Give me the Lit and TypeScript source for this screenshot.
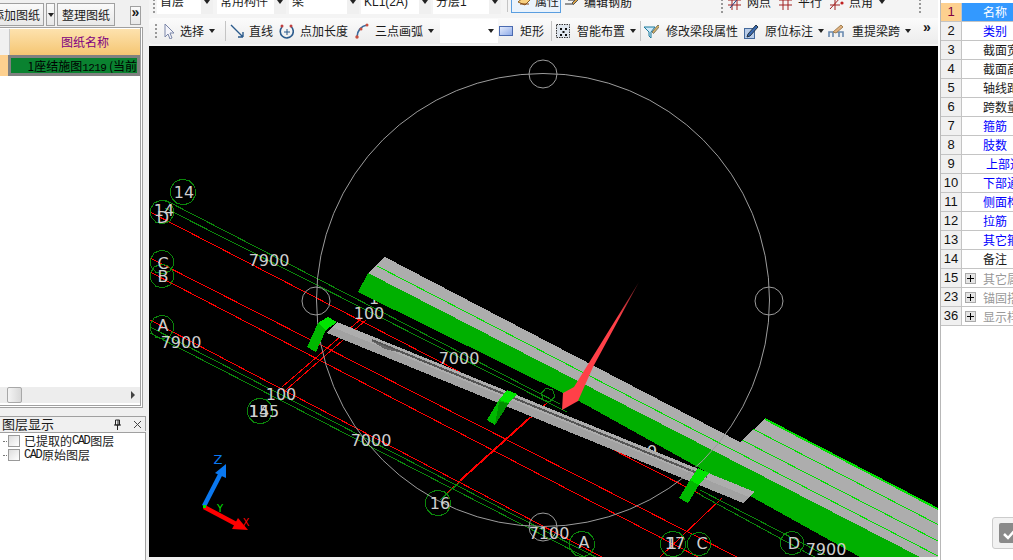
import { LitElement, html, css, svg } from "lit";
import { customElement } from "lit/decorators.js";

const poly = (cx: number, cy: number, r: number, n = 10) =>
  Array.from({ length: n }, (_, i) => {
    const a = (i * 2 * Math.PI) / n + 0.2;
    return `${(cx + r * Math.cos(a)).toFixed(1)},${(cy + r * Math.sin(a)).toFixed(1)}`;
  }).join(" ");

const RED: number[][] = [
  [150, 212, 460, 372], [600, 443, 700, 494],
  [150, 258, 900, 640], [150, 272, 800, 610], [150, 320, 640, 577],
  [362, 318, 282, 387], [366, 320, 286, 390], [548, 402, 447, 493], [530, 417, 460, 480], [722, 498, 660, 557],
];
const GREEN: number[][] = [
  [165, 200, 560, 404], [165, 208, 567, 412], [700, 490, 825, 555], [697, 493, 820, 560],
  [150, 327, 640, 580], [150, 333, 620, 575], [440, 500, 460, 482],
];
const BUBBLES: number[][] = [
  [183, 192, 13], [162, 212, 12], [162, 262, 12], [162, 276, 12], [162, 327, 12], [260, 411, 13],
  [438, 503, 13], [582, 544, 13], [673, 544, 13], [699, 544, 12], [792, 543, 12],
];
const LABELS: [string, number, number][] = [
  ["14", 184, 192], ["14", 164, 210], ["D", 163, 217], ["C", 163, 263], ["B", 163, 276], ["A", 163, 325],
  ["7900", 269, 260], ["7900", 181, 342], ["100", 369, 313], ["7000", 459, 358], ["100", 281, 394],
  ["155", 264, 411], ["14", 259, 411], ["7000", 371, 440], ["16", 440, 503], ["7100", 549, 533],
  ["A", 584, 542], ["17", 675, 543], ["1", 672, 543], ["C", 702, 543], ["D", 794, 543], ["7900", 826, 549],
];

const canvasArt = svg`
  <defs>
    <linearGradient id="arr" gradientUnits="userSpaceOnUse" x1="639" y1="282" x2="620" y2="318">
      <stop offset="0" stop-color="#5a181c"/>
      <stop offset="1" stop-color="#ff4048"/>
    </linearGradient>
  </defs>
  <rect x="149" y="46" width="789" height="511" fill="#000"/>
  <g shape-rendering="crispEdges">
    ${RED.map((l) => svg`<line x1=${l[0]} y1=${l[1]} x2=${l[2]} y2=${l[3]} stroke="#f00" stroke-width="1"/>`)}
    ${GREEN.map((l) => svg`<line x1=${l[0]} y1=${l[1]} x2=${l[2]} y2=${l[3]} stroke="#0b860b" stroke-width="1"/>`)}
    ${BUBBLES.map((b) => svg`<polygon points=${poly(b[0], b[1], b[2])} fill="none" stroke="#0b860b"/>`)}
    <polygon points=${poly(548, 395, 7, 6)} fill="none" stroke="#0b860b"/>
  </g>
  <text x="652" y="457" class="lbl">9</text>
  <text x="374" y="304" class="lbl">1</text>

  <g shape-rendering="crispEdges">
    <polygon points="358,292 368,273 730,455 925,557 860,557 577,400" fill="#00b000"/>
    <polygon points="368,273 385,257 740,442 765,419 938,509 938,557 920,557" fill="#adadad"/>
    <line x1="377" y1="266" x2="938" y2="556" stroke="#00e000"/>
    <line x1="753" y1="429" x2="938" y2="524.5" stroke="#00e000"/>
    <line x1="742" y1="440" x2="938" y2="541" stroke="#00e000"/>
    <line x1="765" y1="419" x2="938" y2="509" stroke="#00e000" stroke-width="2"/>

    <polygon points="337,322 755,492 743,503 327,333" fill="#adadad"/>
    <polygon points="332,327 749,497 743,503 327,333" fill="#a2a2a2"/>
    <line x1="372" y1="340" x2="707" y2="477" stroke="#555" stroke-width="2"/>
    <polygon points="370,340 402,353 385,349" fill="#666"/>
  </g>

  <circle cx="543" cy="300" r="226.5" fill="none" stroke="#9c9c9c"/>
  <circle cx="543" cy="74" r="14" fill="none" stroke="#9c9c9c"/>
  <circle cx="316" cy="301" r="14" fill="none" stroke="#9c9c9c"/>
  <circle cx="769" cy="301" r="14" fill="none" stroke="#9c9c9c"/>
  <circle cx="543" cy="527" r="14" fill="none" stroke="#9c9c9c"/>

  <g shape-rendering="crispEdges">
    <polygon points="318,323 328,317 337,322 326,330 316,352 307,347" fill="#00b800"/>
    <polygon points="318,323 328,317 337,322 326,330" fill="#00e400"/>
    <polygon points="499,400 507,390 517,394 509,403 495,425 487,420" fill="#00b800"/>
    <polygon points="499,400 507,390 517,394 509,403" fill="#00e400"/>
    <polygon points="509,403 495,425 499,402" fill="#009000"/>
    <polygon points="690,480 698,468 709,473 699,485 688,503 679,498" fill="#00b800"/>
    <polygon points="690,480 698,468 709,473 699,485" fill="#00e400"/>
  </g>

  <polygon points="639,282 593,367 578,401 562,410 563,393 574,387" fill="url(#arr)"/>

  ${LABELS.map((t) => svg`<text x=${t[1]} y=${t[2] + 6} class="lbl">${t[0]}</text>`)}

  <line x1="204" y1="506" x2="221" y2="473" stroke="#0a78f0" stroke-width="4.5"/>
  <polygon points="226,464 226,478 215,473" fill="#0a78f0"/>
  <text x="218" y="464" class="axis" fill="#0a78f0">Z</text>
  <line x1="204" y1="507" x2="238" y2="525" stroke="#f00" stroke-width="4.5"/>
  <polygon points="248,530 232,529 238,518" fill="#f00"/>
  <text x="246" y="526" class="axis small" fill="#f00">X</text>
  <text x="220" y="512" class="axis small" fill="#00e000">Y</text>
  <rect x="203" y="505" width="3" height="3" fill="#00e000"/>
`;

const arrow = html`<i class="arrow"></i>`;

const ic = {
  cursor: svg`<path d="M3 1v13l3-3 2 5 2-1-2-5h4z" fill="#f4f4fa" stroke="#7a86a8"/>`,
  line: svg`<path d="M2 2 14 14M14 14V9M14 14H9" fill="none" stroke="#2a5a8c" stroke-width="1.4"/>`,
  len: svg`<path d="M4 4a6.5 6.5 0 1 0 9-.5" fill="none" stroke="#2a5a8c" stroke-width="1.6"/><path d="M9 6v6M6 9h6" stroke="#2a5a8c"/><circle cx="4" cy="3" r="1.5" fill="#c04040"/><circle cx="13" cy="3" r="1.5" fill="#c04040"/>`,
  arc: svg`<path d="M3 14C3 8 7 3 13 2" fill="none" stroke="#3a6a9c" stroke-width="1.6"/><circle cx="3" cy="14" r="1.7" fill="#c85040"/><circle cx="7" cy="6" r="1.5" fill="#c85040"/><circle cx="13" cy="2" r="1.5" fill="#c85040"/>`,
  rect: svg`<defs><linearGradient id="rg" x1="0" y1="0" x2="1" y2="1"><stop offset="0" stop-color="#e8eefc"/><stop offset="1" stop-color="#8aa8e8"/></linearGradient></defs><rect x="1.5" y="3.5" width="13" height="9" fill="url(#rg)" stroke="#4a6ab0"/>`,
  smart: svg`<rect x="1.5" y="1.5" width="13" height="13" fill="#dfe6ee" stroke="#333" stroke-dasharray="1.5 1"/><path d="M5 5h2v2H5zM10 5h2v2H10zM7.5 8h2v2h-2zM5 11h2v2H5zM10 11h2v2H10z" fill="#111"/>`,
  edit: svg`<path d="M1 4h11L8 9v6l-2-2V9z" fill="#cfe8f8" stroke="#1a7a9c"/><path d="M9 9l6-7 1.5 1.5-6 7z" fill="#d8b060" stroke="#776"/>`,
  mark: svg`<rect x="1.5" y="5.5" width="10" height="10" fill="#b8cce8" stroke="#456a9c"/><path d="M5 11l8-9 2 2-8 9-3 1z" fill="#3a6ab0" stroke="#234"/>`,
  span: svg`<path d="M1 14v-5h14v5M5 14v-5M11 14v-5" fill="none" stroke="#6a8ab0" stroke-width="1.6"/><path d="M5 9l8-7 2 2-7 6z" fill="#e0b080" stroke="#a08050"/>`,
  prop: svg`<path d="M1 9l6-5 6 3-5 5z" fill="#f8d080" stroke="#906020"/><path d="M3 11h9" stroke="#804010"/>`,
  rebar: svg`<path d="M1 10h9M4 6h10" stroke="#333"/><path d="M8 9l6-6 1.5 1.5-6 6z" fill="#d8a040" stroke="#555"/>`,
  node: svg`<path d="M5 1v15M10 1v15M1 6h13M1 11h13" stroke="#a02020"/><path d="M3 14 13 2" stroke="#204080"/>`,
  para: svg`<path d="M5 1v15M10 1v15M1 6h13M1 11h13" stroke="#a02020"/>`,
  ang: svg`<path d="M1 15 12 3M6 1v15M1 11h10" stroke="#a02020"/><circle cx="13" cy="9" r="1.6" fill="#c02020"/>`,
};
const icon = (p: unknown) => html`<svg class="ic" viewBox="0 0 16 16" width="16" height="16">${p}</svg>`;

type Item = { w: number; iw?: number; i?: unknown; t?: string; a?: boolean; sep?: boolean; grip?: boolean };
const TB2: Item[] = [
  { w: 12, grip: true },
  { w: 60, iw: 18, i: ic.cursor, t: "选择", a: true },
  { w: 7, sep: true },
  { w: 49, iw: 20, i: ic.line, t: "直线" },
  { w: 76, iw: 22, i: ic.len, t: "点加长度" },
  { w: 86, iw: 21, i: ic.arc, t: "三点画弧", a: true },
];
const TB2B: Item[] = [
  { w: 50, iw: 22, i: ic.rect, t: "矩形" },
  { w: 7, sep: true },
  { w: 82, iw: 22, i: ic.smart, t: "智能布置", a: true },
  { w: 6, sep: true },
  { w: 100, iw: 23, i: ic.edit, t: "修改梁段属性" },
  { w: 85, iw: 22, i: ic.mark, t: "原位标注", a: true },
  { w: 88, iw: 24, i: ic.span, t: "重提梁跨", a: true },
];
const COMBOS: [string, number, number][] = [
  ["首层", 56, 4], ["常用构件", 69, 3], ["梁", 70, 2], ["KL1(2A)", 70, 2], ["分层1", 68, 0],
];
const ROWS: [string, string, string][] = [
  ["2", "类别", "b"], ["3", "截面宽度(mm)", ""], ["4", "截面高度(mm)", ""], ["5", "轴线距梁左边线距离", ""],
  ["6", "跨数量", ""], ["7", "箍筋", "b"], ["8", "肢数", "b"], ["9", "上部通长筋", "b u"], ["10", "下部通长筋", "b"],
  ["11", "侧面构造或受扭筋", "b"], ["12", "拉筋", "b"], ["13", "其它箍筋", "b"], ["14", "备注", ""],
];
const GROUPS: [string, string][] = [["15", "其它属性"], ["23", "锚固搭接"], ["36", "显示样式"]];

@customElement("app-root")
export class AppRoot extends LitElement {
  static styles = css`
    :host { display: block; width: 1013px; height: 560px; overflow: hidden; position: relative; background: #f0f0f0;
      font: 12px/16px "Noto Sans CJK SC", "Liberation Sans", sans-serif; color: #1a1a1a; }
    .root { display: flex; height: 560px; }
    .left { width: 149px; flex: none; display: flex; flex-direction: column; overflow: hidden; }
    .tabs { height: 27px; flex: none; display: flex; align-items: flex-start; padding-top: 3px; box-sizing: border-box; }
    .btn { height: 23px; box-sizing: border-box; border: 1px solid #a0a0a0; background: linear-gradient(#fafafa, #e8e8e8);
      display: flex; align-items: center; justify-content: center; font-size: 12px; white-space: nowrap; overflow: hidden; }
    .b1 { width: 44px; justify-content: flex-end; margin-right: 2px; border-left: 0; padding-right: 3px; }
    .b2 { width: 9px; margin-right: 2px; }
    .b3 { width: 58px; margin-right: 15px; }
    .b4 { width: 11px; height: 19px; margin-top: 3px; font: bold 14px/10px "Liberation Sans", sans-serif; align-items: flex-start; padding-top: 0; }
    .draw { width: 143px; height: 381px; flex: none; box-sizing: border-box; border: 1px solid #a0a0a0; border-left: 0;
      background: #fff; box-shadow: inset -1px -1px 0 #fff, inset -2px -2px 0 #a0a0a0; padding: 1px 2px 2px 0; display: flex; flex-direction: column; }
    .thead { display: flex; height: 26px; flex: none; }
    .corner { width: 9px; background: #f0f0f0; border-right: 1px solid #c8c8c8; }
    .hcell { flex: 1; background: linear-gradient(#fde2ae, #f5c673); color: #800080; font-size: 12px;
      display: flex; align-items: center; justify-content: center; padding: 0 0 0 20px; box-sizing: border-box; }
    .trow { display: flex; height: 21px; flex: none; }
    .rowhead { width: 8px; background: #fdd08f; }
    .selcell { flex: 1; box-sizing: border-box; border: 3px solid #808080; background: #0a8230; color: #000; white-space: nowrap;
      overflow: hidden; text-align: right; line-height: 15px; font-size: 12px; }
    .dig { font: 11px/15px "Liberation Mono", monospace; letter-spacing: -0.6px; }
    .tbody { flex: 1; }
    .hscroll { height: 16px; flex: none; margin-bottom: 2px; background: #ededed; display: flex; align-items: center; padding: 0 5px 0 7px; justify-content: space-between; }
    .thumb { width: 15px; height: 16px; box-sizing: border-box; border: 1px solid #a8a8a8; border-radius: 2px; background: linear-gradient(90deg, #f4f4f4, #d8d8d8); }
    .rarr { width: 0; height: 0; border-left: 4px solid #444; border-top: 4px solid transparent; border-bottom: 4px solid transparent; }
    .ltitle { margin-top: 8px; width: 146px; height: 15px; flex: none; box-sizing: border-box; border-top: 1px solid #a0a0a0; border-right: 1px solid #a0a0a0; display: flex; align-items: center; font-size: 13px; white-space: nowrap; padding-left: 2px; }
    .ltitle span { flex: 1; }
    .pin { margin-right: 11px; display: block; }
    .close { margin-right: 3px; display: block; }
    .lbody { margin-top: 1px; width: 146px; flex: 1; box-sizing: border-box; border: 1px solid #a0a0a0; border-left: 0; border-bottom: 0; background: #fff; padding-top: 1px; }
    .node { height: 14px; display: flex; align-items: center; font-size: 12px; white-space: nowrap; }
    .dots { width: 4px; margin: 0 1px 0 3px; border-bottom: 1px dotted #777; }
    .chk { width: 12px; height: 12px; box-sizing: border-box; border: 1px solid #999; background: linear-gradient(135deg, #ddd, #fff); margin-right: 4px; flex: none; }
    .mono { font: 12px/14px "Liberation Mono", monospace; letter-spacing: -1.5px; margin-right: 1px; }

    .center { width: 789px; flex: none; display: flex; flex-direction: column; }
    .tb1 { height: 15px; flex: none; overflow: hidden; background: #f4f4f4; }
    .tb1in { height: 25px; margin-top: -11px; display: flex; align-items: stretch; padding-left: 1px; }
    .grip { flex: none; position: relative; display: flex; justify-content: center; align-items: center; }
    .grip::before { content: ""; width: 2px; height: 14px; background: repeating-linear-gradient(#999 0 2px, transparent 2px 4px); }
    .tb1in .grip { align-items: flex-end; padding-bottom: 1px; }
    .combo { flex: none; box-sizing: border-box; background: #fff; display: flex; align-items: center; padding-left: 3px; overflow: hidden; white-space: nowrap; position: relative; }
    .combo .txt { flex: 1; overflow: hidden; }
    .lat { font-family: "Liberation Sans", "Noto Sans CJK SC", sans-serif; }
    .drop { width: 12px; height: 100%; background: #f0f0f0; flex: none; display: flex; align-items: center; justify-content: center; }
    .arrow { display: inline-block; width: 0; height: 0; border-top: 4px solid #222; border-left: 3.5px solid transparent; border-right: 3.5px solid transparent; flex: none; }
    .t1sep { width: 1px; background: #c4c4c4; margin: 11px 3px 2px 6px; flex: none; }
    .active { width: 50px; flex: none; box-sizing: border-box; border: 1px solid #5a9ee0; background: #eaf3fc; display: flex; align-items: center; height: 24px; padding-left: 5px; margin-right: 3px; gap: 2px; }
    .t1it { display: flex; align-items: center; flex: none; white-space: nowrap; }
    .tb2wrap { height: 31px; flex: none; padding-top: 3px; box-sizing: border-box; background: #f4f4f4; }
    .tb2 { height: 26px; display: flex; align-items: center; padding-left: 1px; border-radius: 4px 0 0 4px; background: linear-gradient(#fbfbfb, #ececec); white-space: nowrap; }
    .it { flex: none; display: flex; align-items: center; height: 100%; }
    .iw { display: flex; flex: none; }
    .it .arrow { margin-left: 5px; }
    .sepw { flex: none; height: 100%; display: flex; align-items: center; justify-content: center; }
    .sepw i { display: block; width: 1px; height: 20px; background: #c4c4c4; }
    .combo2 { width: 58px; flex: none; height: 24px; background: #fff; display: flex; justify-content: flex-end; align-items: center; padding-right: 4px; box-sizing: border-box; }
    .more { flex: none; margin-left: 7px; font: bold 14px/10px "Liberation Sans", sans-serif; align-self: flex-start; margin-top: 4px; }
    .cv { display: block; flex: none; }
    .lbl { font: 16px "DejaVu Sans", sans-serif; fill: #cfcfcf; text-anchor: middle; }
    .axis { font: 13px "DejaVu Sans", sans-serif; text-anchor: middle; }
    .small { font-size: 10px; }

    .right { flex: 1; min-width: 0; background: #fff; display: flex; flex-direction: column; padding: 3px 0 0 2px; position: relative; overflow: hidden; }
    .right::before { content: ""; position: absolute; left: 2px; top: 0; bottom: 0; width: 1px; background: #b8b8b8; }
    .gridw { margin-left: 1px; }
    .r { display: flex; height: 19px; box-sizing: border-box; border-bottom: 1px solid #c4c4c4; }
    .num { width: 21px; flex: none; background: #f0f0f0; border-right: 1px solid #c4c4c4; box-sizing: border-box; text-align: center; font: 13px/18px "Liberation Sans", sans-serif; color: #111; }
    .val { width: 300px; flex: none; padding-left: 21px; line-height: 17px; white-space: nowrap; box-sizing: border-box; }
    .b { color: #0000ff; }
    .u { padding-left: 24px; }
    .sel .num { background: #fdd08f; color: #800040; }
    .sel .val { background: #3399ff; color: #fff; }
    .g .val { color: #999; display: flex; align-items: center; padding-left: 3px; }
    .plus { width: 11px; height: 11px; box-sizing: border-box; border: 1px solid #aaa; background: #e4e4e4; margin-right: 7px; flex: none; position: relative; }
    .plus::before { content: ""; position: absolute; left: 1px; right: 1px; top: 4px; height: 1px; background: #000; }
    .plus::after { content: ""; position: absolute; top: 1px; bottom: 1px; left: 4px; width: 1px; background: #000; }
    .float { position: absolute; left: 992px; top: 517px; width: 40px; height: 32px; box-sizing: border-box; border: 1px solid #ccc; border-radius: 3px; background: #f2f2f2; padding: 5px 0 0 6px; }
  `;

  private item(it: Item) {
    if (it.grip) return html`<div class="grip" style="width:${it.w}px"></div>`;
    if (it.sep) return html`<div class="sepw" style="width:${it.w}px"><i></i></div>`;
    return html`<div class="it" style="width:${it.w}px"><span class="iw" style="width:${it.iw}px">${icon(it.i)}</span><span>${it.t}</span>${it.a ? arrow : ""}</div>`;
  }

  render() {
    return html`<div class="root">
      <div class="left">
        <div class="tabs">
          <div class="btn b1">添加图纸</div>
          <div class="btn b2">${arrow}</div>
          <div class="btn b3">整理图纸</div>
          <div class="btn b4">»</div>
        </div>
        <div class="draw">
          <div class="thead"><div class="corner"></div><div class="hcell">图纸名称</div></div>
          <div class="trow"><div class="rowhead"></div><div class="selcell">1座结施图<span class="dig">1219</span> (当前</div></div>
          <div class="tbody"></div>
          <div class="hscroll"><div class="thumb"></div><div class="rarr"></div></div>
        </div>
        <div class="ltitle">
          <span>图层显示</span>
          <svg class="pin" width="9" height="11" viewBox="0 0 9 11"><path d="M2.5 1h4v5h-4zM1 6h7M4.5 6v5M5 1v5" fill="none" stroke="#222"/></svg>
          <svg class="close" width="9" height="9" viewBox="0 0 9 9"><path d="M1 1l7 7M8 1L1 8" stroke="#444"/></svg>
        </div>
        <div class="lbody">
          <div class="node"><i class="dots"></i><i class="chk"></i>已提取的<span class="mono">CAD</span>图层</div>
          <div class="node"><i class="dots"></i><i class="chk"></i><span class="mono">CAD</span>原始图层</div>
        </div>
      </div>

      <div class="center">
        <div class="tb1"><div class="tb1in">
          <div class="grip" style="width:7px"></div>
          ${COMBOS.map(([t, w, m]) => html`<div class="combo" style="width:${w}px;margin-right:${m}px"><span class="txt lat">${t}</span><span class="drop">${arrow}</span></div>`)}
          <i class="t1sep"></i>
          <div class="active">${icon(ic.prop)}<span>属性</span></div>
          <div class="t1it" style="width:153px">${icon(ic.rebar)}<span style="margin-left:4px">编辑钢筋</span></div>
          <div class="grip" style="width:10px"></div>
          <div class="t1it" style="width:51px">${icon(ic.node)}<span style="margin-left:4px">网点</span></div>
          <div class="t1it" style="width:51px">${icon(ic.para)}<span style="margin-left:4px">平行</span></div>
          <div class="t1it" style="width:89px">${icon(ic.ang)}<span style="margin:0 6px 0 4px">点角</span>${arrow}</div>
          <div class="grip" style="width:4px"></div>
        </div></div>
        <div class="tb2wrap"><div class="tb2">
          ${TB2.map((i) => this.item(i))}
          <div class="combo2">${arrow}</div>
          ${TB2B.map((i) => this.item(i))}
          <div class="more">»</div>
        </div></div>
        <svg class="cv" width="789" height="511" viewBox="149 46 789 511">${canvasArt}</svg>
      </div>

      <div class="right">
        <div class="gridw">
          <div class="r sel"><div class="num">1</div><div class="val">名称</div></div>
          ${ROWS.map(([n, t, c]) => html`<div class="r"><div class="num">${n}</div><div class="val ${c}">${t}</div></div>`)}
          ${GROUPS.map(([n, t]) => html`<div class="r g"><div class="num">${n}</div><div class="val"><i class="plus"></i>${t}</div></div>`)}
        </div>
      </div>
    </div>
    <div class="float"><svg width="30" height="20" viewBox="0 0 30 20"><rect width="24" height="20" rx="2" fill="#8a8a8a"/><path d="M5 11l4 4 9-10" fill="none" stroke="#fff" stroke-width="2.5"/></svg></div>`;
  }
}
